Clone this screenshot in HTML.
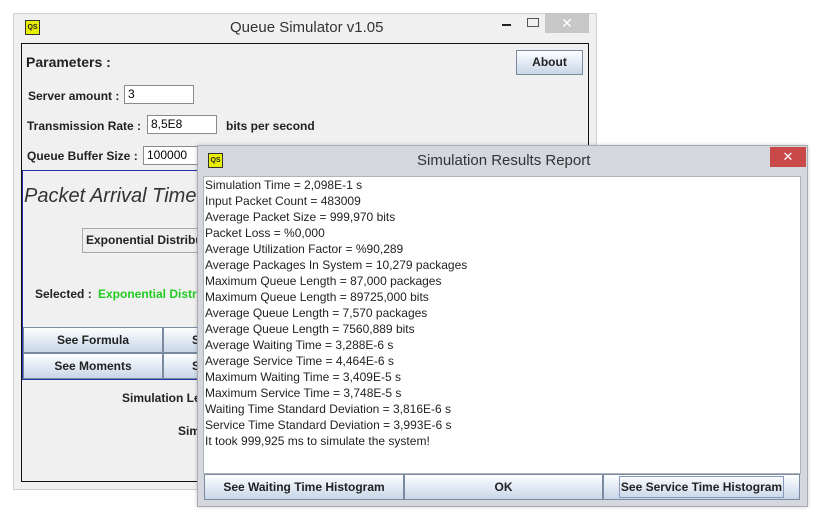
<!DOCTYPE html><html><head><style>
body{margin:0;width:816px;height:514px;background:#fff;position:relative;overflow:hidden;font-family:"Liberation Sans",Arial,sans-serif;}
.a{position:absolute;white-space:nowrap;}
.b{font-weight:bold;font-size:12px;color:#222;}
.btn{position:absolute;white-space:nowrap;overflow:hidden;background:linear-gradient(#fdfeff,#dde6f2 60%,#c9d6e6);border:1px solid #7a8aa0;font-weight:bold;font-size:12px;color:#222;text-align:center;box-sizing:border-box;}
.inp{position:absolute;background:#fff;border:1px solid #8a8a8a;font-size:12px;padding-left:3px;box-sizing:border-box;line-height:17px;}
.logo{position:absolute;width:13px;height:13px;background:#e8f000;border:1px solid #333;font-size:7px;font-weight:bold;line-height:13px;text-align:center;color:#222;}
</style></head><body>
<div class="a" style="left:13px;top:13px;width:584px;height:477px;background:#f0f0f0;border:1px solid #cfcfcf;box-sizing:border-box;"></div>
<div class="logo" style="left:25px;top:20px;">QS</div>
<div class="a" style="left:230px;top:19px;font-size:15px;color:#333;">Queue Simulator v1.05</div>
<div class="a" style="left:502px;top:24px;width:9px;height:2px;background:#222;"></div>
<div class="a" style="left:527px;top:18px;width:10px;height:7px;border:1px solid #555;"></div>
<div class="a" style="left:545px;top:13px;width:44px;height:20px;background:#c7c7c7;color:#fff;font-size:14px;text-align:center;line-height:20px;">✕</div>
<div class="a" style="left:21px;top:43px;width:568px;height:439px;border:1px solid #111;box-sizing:border-box;"></div>
<div class="a b" style="left:26px;top:54px;font-size:14px;">Parameters :</div>
<div class="btn" style="left:516px;top:50px;width:67px;height:25px;line-height:23px;">About</div>
<div class="a b" style="left:28px;top:89px;">Server amount :</div>
<div class="inp" style="left:124px;top:85px;width:70px;height:19px;">3</div>
<div class="a b" style="left:27px;top:119px;">Transmission Rate :</div>
<div class="inp" style="left:147px;top:115px;width:70px;height:19px;">8,5E8</div>
<div class="a b" style="left:226px;top:119px;">bits per second</div>
<div class="a b" style="left:27px;top:149px;">Queue Buffer Size :</div>
<div class="inp" style="left:143px;top:146px;width:70px;height:19px;">100000</div>
<div class="a" style="left:22px;top:170px;width:200px;height:210px;border:1px solid #2233aa;border-right:none;box-sizing:border-box;"></div>
<div class="a" style="left:24px;top:185px;font-size:20px;font-style:italic;color:#333;">Packet Arrival Time</div>
<div class="btn" style="left:82px;top:228px;width:130px;height:25px;line-height:23px;text-align:left;padding-left:3px;background:#eee;border-color:#aaa;">Exponential Distribution</div>
<div class="a b" style="left:35px;top:287px;">Selected :</div>
<div class="a b" style="left:98px;top:287px;color:#22cc22;">Exponential Distribution</div>
<div class="btn" style="left:23px;top:327px;width:140px;height:26px;line-height:25px;">See Formula</div>
<div class="btn" style="left:163px;top:327px;width:60px;height:26px;line-height:25px;text-align:left;padding-left:28px;">S</div>
<div class="btn" style="left:23px;top:353px;width:140px;height:26px;line-height:25px;">See Moments</div>
<div class="btn" style="left:163px;top:353px;width:60px;height:26px;line-height:25px;text-align:left;padding-left:28px;">S</div>
<div class="a b" style="left:122px;top:391px;">Simulation Length</div>
<div class="a b" style="left:178px;top:424px;">Simulate</div>
<div class="a" style="left:197px;top:145px;width:611px;height:362px;background:#d4d8de;border:1px solid #a8acb2;box-sizing:border-box;box-shadow:0 0 4px rgba(0,0,0,.2);"></div>
<div class="logo" style="left:208px;top:153px;">QS</div>
<div class="a" style="left:417px;top:152px;font-size:15px;color:#333;">Simulation Results Report</div>
<div class="a" style="left:770px;top:147px;width:36px;height:20px;background:#c94848;color:#fff;font-size:13px;text-align:center;line-height:20px;">✕</div>
<div class="a" style="left:203px;top:176px;width:598px;height:298px;background:#fff;border:1px solid #b0b4ba;box-sizing:border-box;"></div>
<div class="a" style="left:205px;top:177px;font-size:12px;line-height:16px;color:#222;">Simulation Time = 2,098E-1 s<br>Input Packet Count = 483009<br>Average Packet Size = 999,970 bits<br>Packet Loss = %0,000<br>Average Utilization Factor = %90,289<br>Average Packages In System = 10,279 packages<br>Maximum Queue Length = 87,000 packages<br>Maximum Queue Length = 89725,000 bits<br>Average Queue Length = 7,570 packages<br>Average Queue Length = 7560,889 bits<br>Average Waiting Time = 3,288E-6 s<br>Average Service Time = 4,464E-6 s<br>Maximum Waiting Time = 3,409E-5 s<br>Maximum Service Time = 3,748E-5 s<br>Waiting Time Standard Deviation = 3,816E-6 s<br>Service Time Standard Deviation = 3,993E-6 s<br>It took 999,925 ms to simulate the system!</div>
<div class="btn" style="left:204px;top:474px;width:200px;height:26px;line-height:25px;">See Waiting Time Histogram</div>
<div class="btn" style="left:404px;top:474px;width:199px;height:26px;line-height:25px;">OK</div>
<div class="btn" style="left:603px;top:474px;width:197px;height:26px;line-height:25px;">See Service Time Histogram</div>
<div class="a" style="left:619px;top:476px;width:163px;height:20px;border:1px solid #8899bb;"></div>
</body></html>
